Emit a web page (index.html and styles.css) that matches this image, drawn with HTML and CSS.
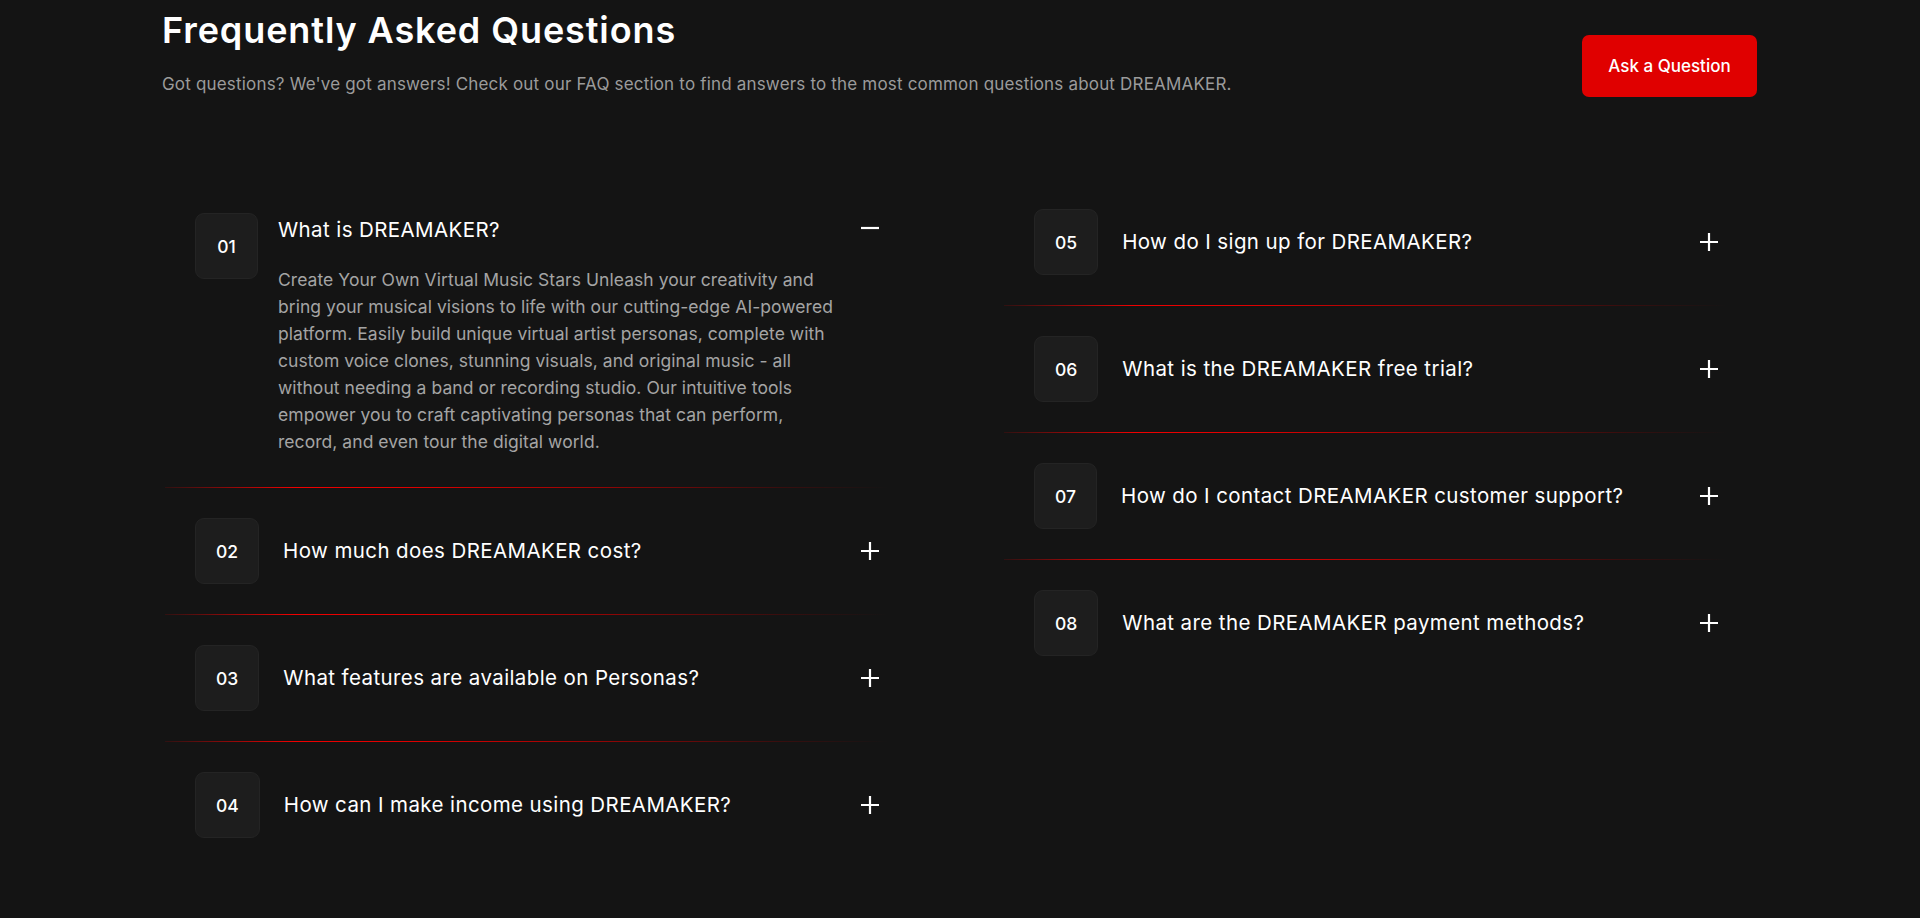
FILE: index.html
```html
<!DOCTYPE html>
<html lang="en">
<head>
<meta charset="utf-8">
<title>FAQ - DREAMAKER</title>
<link rel="stylesheet" href="styles.css">
</head>
<body>
<section class="faq">
  <header class="faq-head">
    <div class="faq-intro">
      <h1 class="faq-title">Frequently Asked Questions</h1>
      <p class="faq-sub">Got questions? We've got answers! Check out our FAQ section to find answers to the most common questions about DREAMAKER.</p>
    </div>
    <a class="ask-btn" href="#">Ask a Question</a>
  </header>

  <div class="faq-grid">
    <div class="faq-col">
      <div class="faq-item open">
        <div class="num">01</div>
        <div class="body">
          <div class="q">What is DREAMAKER?</div>
          <p class="a">Create Your Own Virtual Music Stars Unleash your creativity and bring your musical visions to life with our cutting-edge AI-powered platform. Easily build unique virtual artist personas, complete with custom voice clones, stunning visuals, and original music - all without needing a band or recording studio. Our intuitive tools empower you to craft captivating personas that can perform, record, and even tour the digital world.</p>
        </div>
        <svg class="toggle" viewBox="0 0 20 20" width="20" height="20"><path d="M1 10H19" stroke="#fff" stroke-width="2.2"/></svg>
      </div>
      <div class="faq-item">
        <div class="num">02</div>
        <div class="q">How much does DREAMAKER cost?</div>
        <svg class="toggle" viewBox="0 0 20 20" width="20" height="20"><path d="M1 10H19M10 1V19" stroke="#fff" stroke-width="2.2"/></svg>
      </div>
      <div class="faq-item">
        <div class="num">03</div>
        <div class="q">What features are available on Personas?</div>
        <svg class="toggle" viewBox="0 0 20 20" width="20" height="20"><path d="M1 10H19M10 1V19" stroke="#fff" stroke-width="2.2"/></svg>
      </div>
      <div class="faq-item last">
        <div class="num">04</div>
        <div class="q">How can I make income using DREAMAKER?</div>
        <svg class="toggle" viewBox="0 0 20 20" width="20" height="20"><path d="M1 10H19M10 1V19" stroke="#fff" stroke-width="2.2"/></svg>
      </div>
    </div>

    <div class="faq-col right">
      <div class="faq-item">
        <div class="num">05</div>
        <div class="q">How do I sign up for DREAMAKER?</div>
        <svg class="toggle" viewBox="0 0 20 20" width="20" height="20"><path d="M1 10H19M10 1V19" stroke="#fff" stroke-width="2.2"/></svg>
      </div>
      <div class="faq-item">
        <div class="num">06</div>
        <div class="q">What is the DREAMAKER free trial?</div>
        <svg class="toggle" viewBox="0 0 20 20" width="20" height="20"><path d="M1 10H19M10 1V19" stroke="#fff" stroke-width="2.2"/></svg>
      </div>
      <div class="faq-item">
        <div class="num">07</div>
        <div class="q">How do I contact DREAMAKER customer support?</div>
        <svg class="toggle" viewBox="0 0 20 20" width="20" height="20"><path d="M1 10H19M10 1V19" stroke="#fff" stroke-width="2.2"/></svg>
      </div>
      <div class="faq-item last">
        <div class="num">08</div>
        <div class="q">What are the DREAMAKER payment methods?</div>
        <svg class="toggle" viewBox="0 0 20 20" width="20" height="20"><path d="M1 10H19M10 1V19" stroke="#fff" stroke-width="2.2"/></svg>
      </div>
    </div>
  </div>
</section>
</body>
</html>
```

FILE: styles.css
```css
* { box-sizing: border-box; }

html, body {
  margin: 0;
  background: #141414;
  color: #fff;
  font-family: Inter, "Noto Sans", sans-serif;
}

.faq {
  padding: 10px 163px 0 162px;
  min-height: 918px;
}

.faq-head {
  display: flex;
  justify-content: space-between;
  align-items: flex-start;
}

.faq-title {
  margin: 0;
  font-size: 36px;
  line-height: 41px;
  font-weight: 600;
  letter-spacing: 0.9px;
}

.faq-sub {
  margin: 21px 0 0;
  font-size: 17px;
  line-height: 24px;
  color: #9b9b9b;
  letter-spacing: 0.18px;
}

.ask-btn {
  margin-top: 25px;
  width: 175px;
  height: 62px;
  display: flex;
  align-items: center;
  justify-content: center;
  background: #e00000;
  color: #fff;
  border-radius: 7px;
  text-decoration: none;
  font-size: 17px;
  font-weight: 500;
}

.faq-grid {
  display: grid;
  grid-template-columns: 723px 723px;
  column-gap: 116px;
  margin-top: 82px;
  margin-left: 3px;
}

.faq-item {
  position: relative;
  display: flex;
  align-items: center;
  padding: 30px 8px 31px 30px;
}

.faq-item::after {
  content: "";
  position: absolute;
  left: 0;
  right: 0;
  bottom: 0;
  height: 1px;
  background: linear-gradient(90deg, rgba(200,0,0,0.15) 0%, #f00000 18%, #dd0000 35%, rgba(190,0,0,0.75) 60%, rgba(140,0,0,0.3) 85%, rgba(60,0,0,0) 100%);
}

.faq-item.last::after { display: none; }

.faq-item.open {
  align-items: flex-start;
  padding-top: 34px;
  padding-bottom: 33px;
}

.num {
  flex: none;
  height: 66px;
  padding: 0 20px;
  min-width: 63px;
  display: flex;
  align-items: center;
  justify-content: center;
  background: #1d1d1d;
  border: 1px solid #242424;
  border-radius: 9px;
  font-size: 17.5px;
  font-weight: 500;
  color: #fff;
}

.q {
  margin-left: 24px;
  font-size: 20.5px;
  line-height: 28px;
  font-weight: 400;
  letter-spacing: 0.4px;
  color: #fff;
}

.open .body {
  margin-left: 20px;
  padding-top: 3px;
  width: 556px;
  flex: none;
}

.open .q { margin-left: 0; }

.a {
  margin: 22px 0 0;
  font-size: 17.5px;
  line-height: 27px;
  color: #a4a4a4;
  letter-spacing: 0.05px;
}

.toggle {
  flex: none;
  margin-left: auto;
}

.open .toggle { margin-top: 5px; }
```
